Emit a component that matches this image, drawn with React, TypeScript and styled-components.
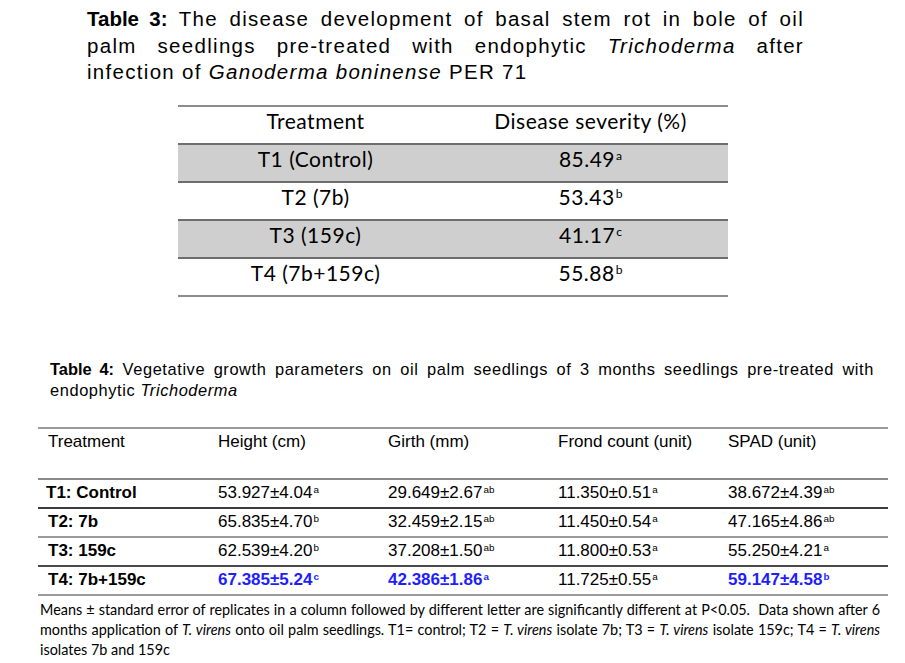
import styled, { createGlobalStyle } from "styled-components";

const GlobalStyle = createGlobalStyle`
  html, body {
    margin: 0;
    padding: 0;
    background: #ffffff;
  }
  body {
    font-family: "Liberation Sans", Arial, sans-serif;
    color: #000;
  }
`;

const Page = styled.div`
  width: 905px;
  height: 663px;
  display: flex;
  flex-direction: column;
  overflow: hidden;
`;

const Caption3 = styled.p`
  margin: 6px 0 0 87px;
  width: 717px;
  font-size: 20.5px;
  line-height: 26.5px;
  letter-spacing: 1.3px;
  text-align: justify;
  b {
    letter-spacing: 0;
  }
`;

const Table3 = styled.table`
  margin: 19px 0 0 178px;
  width: 550px;
  border-collapse: collapse;
  font-family: Lato, "Open Sans", sans-serif;
  font-size: 21px;
  letter-spacing: 0.5px;
  border-top: 2px solid #8c8c8c;
  border-bottom: 2px solid #8c8c8c;
`;

const Row3 = styled.tr<{ $shade?: boolean }>`
  background: ${(p) => (p.$shade ? "#cfcfcf" : "transparent")};
  border-top: 2px solid #6e6e6e;
  &:first-child {
    border-top: none;
  }
`;

const Cell3 = styled.td`
  width: 50%;
  height: 29px;
  padding: 0 0 7px;
  text-align: center;
  vertical-align: middle;
  line-height: 24px;
`;

const Sup = styled.sup`
  font-size: 0.58em;
  vertical-align: 0.55em;
  line-height: 0;
  margin-left: 1px;
  letter-spacing: 0;
`;

const Caption4 = styled.p`
  margin: 62px 0 0 50px;
  width: 824px;
  font-size: 16.4px;
  line-height: 21px;
  letter-spacing: 0.6px;
  text-align: justify;
  b {
    letter-spacing: 0;
  }
`;

const Table4 = styled.table`
  margin: 26px 0 0 38px;
  width: 850px;
  border-collapse: collapse;
  table-layout: fixed;
  font-size: 17px;
  border-top: 2px solid #9a9a9a;
`;

const Row4 = styled.tr<{ $line: string; $h: number }>`
  height: ${(p) => p.$h}px;
  border-bottom: 2px solid ${(p) => p.$line};
`;

const HeadCell = styled.th`
  box-sizing: border-box;
  width: 170px;
  padding: 3px 0 0 10px;
  text-align: left;
  vertical-align: top;
  font-weight: normal;
  line-height: 20px;
`;

const Cell4 = styled.td<{ $bold?: boolean; $blue?: boolean }>`
  box-sizing: border-box;
  padding: 0 0 0 10px;
  text-align: left;
  vertical-align: middle;
  line-height: 20px;
  font-weight: ${(p) => (p.$bold ? "bold" : "normal")};
  color: ${(p) => (p.$blue ? "#1e1eff" : "#000")};
`;

const LabelCell = styled(Cell4)<{ $indent: number }>`
  padding-left: ${(p) => p.$indent}px;
  font-weight: bold;
`;

const Note = styled.p`
  margin: 4px 0 0 40px;
  width: 840px;
  font-family: Lato, "Open Sans", sans-serif;
  font-size: 14.4px;
  line-height: 20px;
  letter-spacing: 0;
  text-align: justify;
`;

type Val = { v: string; s: string; blue?: boolean };

const rows4: { label: string; indent: number; line: string; cells: Val[] }[] = [
  {
    label: "T1: Control",
    indent: 8,
    line: "#3c3c3c",
    cells: [
      { v: "53.927±4.04", s: "a" },
      { v: "29.649±2.67", s: "ab" },
      { v: "11.350±0.51", s: "a" },
      { v: "38.672±4.39", s: "ab" },
    ],
  },
  {
    label: "T2: 7b",
    indent: 10,
    line: "#9a9a9a",
    cells: [
      { v: "65.835±4.70", s: "b" },
      { v: "32.459±2.15", s: "ab" },
      { v: "11.450±0.54", s: "a" },
      { v: "47.165±4.86", s: "ab" },
    ],
  },
  {
    label: "T3: 159c",
    indent: 10,
    line: "#4a4a4a",
    cells: [
      { v: "62.539±4.20", s: "b" },
      { v: "37.208±1.50", s: "ab" },
      { v: "11.800±0.53", s: "a" },
      { v: "55.250±4.21", s: "a" },
    ],
  },
  {
    label: "T4: 7b+159c",
    indent: 10,
    line: "#9a9a9a",
    cells: [
      { v: "67.385±5.24", s: "c", blue: true },
      { v: "42.386±1.86", s: "a", blue: true },
      { v: "11.725±0.55", s: "a" },
      { v: "59.147±4.58", s: "b", blue: true },
    ],
  },
];

const rows3 = [
  { t: "T1 (Control)", v: "85.49", s: "a", shade: true },
  { t: "T2 (7b)", v: "53.43", s: "b", shade: false },
  { t: "T3 (159c)", v: "41.17", s: "c", shade: true },
  { t: "T4 (7b+159c)", v: "55.88", s: "b", shade: false },
];

export default function App() {
  return (
    <Page>
      <GlobalStyle />
      <Caption3>
        <b>Table 3:</b> The disease development of basal stem rot in bole of oil
        palm seedlings pre-treated with endophytic <i>Trichoderma</i> after
        infection of <i>Ganoderma boninense</i> PER 71
      </Caption3>

      <Table3>
        <tbody>
          <Row3>
            <Cell3>Treatment</Cell3>
            <Cell3>Disease severity (%)</Cell3>
          </Row3>
          {rows3.map((r) => (
            <Row3 key={r.t} $shade={r.shade}>
              <Cell3>{r.t}</Cell3>
              <Cell3>
                {r.v}
                <Sup>{r.s}</Sup>
              </Cell3>
            </Row3>
          ))}
        </tbody>
      </Table3>

      <Caption4>
        <b>Table 4:</b> Vegetative growth parameters on oil palm seedlings of 3
        months seedlings pre-treated with endophytic <i>Trichoderma</i>
      </Caption4>

      <Table4>
        <tbody>
          <Row4 $line="#8a8a8a" $h={51}>
            <HeadCell>Treatment</HeadCell>
            <HeadCell>Height (cm)</HeadCell>
            <HeadCell>Girth (mm)</HeadCell>
            <HeadCell>Frond count (unit)</HeadCell>
            <HeadCell>SPAD (unit)</HeadCell>
          </Row4>
          {rows4.map((r) => (
            <Row4 key={r.label} $line={r.line} $h={29}>
              <LabelCell $indent={r.indent}>{r.label}</LabelCell>
              {r.cells.map((c, i) => (
                <Cell4 key={i} $blue={c.blue} $bold={c.blue}>
                  {c.v}
                  <Sup>{c.s}</Sup>
                </Cell4>
              ))}
            </Row4>
          ))}
        </tbody>
      </Table4>

      <Note>
        Means ± standard error of replicates in a column followed by different
        letter are significantly different at P&lt;0.05.&nbsp; Data shown after 6
        months application of <i>T. virens</i> onto oil palm seedlings. T1=
        control; T2 = <i>T. virens</i> isolate 7b; T3 = <i>T. virens</i> isolate
        159c; T4 = <i>T. virens</i> isolates 7b and 159c
      </Note>
    </Page>
  );
}
